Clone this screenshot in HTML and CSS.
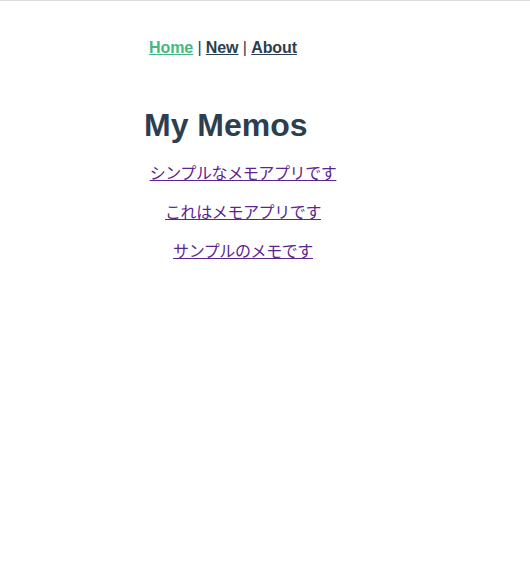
FILE: index.html
```html
<!DOCTYPE html>
<html lang="ja">
<head>
<meta charset="utf-8">
<title>My Memos</title>
<link rel="stylesheet" href="styles.css">
</head>
<body>
<div class="app">
  <nav class="nav">
    <span class="nav-inner"><a href="#" class="nav-link active">Home</a> | <a href="#" class="nav-link">New</a> | <a href="#" class="nav-link">About</a></span>
  </nav>
  <div class="home">
    <h1 class="title">My Memos</h1>
    <ul class="memos">
      <li class="memo"><a href="#" class="memo-link">シンプルなメモアプリです</a></li>
      <li class="memo"><a href="#" class="memo-link">これはメモアプリです</a></li>
      <li class="memo"><a href="#" class="memo-link">サンプルのメモです</a></li>
    </ul>
  </div>
</div>
</body>
</html>
```
FILE: styles.css
```css
html {
  border-top: 1px solid #dcdcdc;
  background: #fff;
}
body {
  margin: 8px 8px 8px;
}
.app {
  margin-left: 136px;
  width: 158px;
  font-family: "Liberation Sans", Arial, "Noto Sans CJK JP", sans-serif;
  text-align: center;
  color: #2c3e50;
}
.nav {
  padding: 30px 0;
  font-size: 16px;
  display: flex;
  justify-content: center;
}
.nav-inner {
  white-space: nowrap;
  letter-spacing: -0.1px;
}
.nav-link {
  font-weight: bold;
  color: #2c3e50;
}
.nav-link.active {
  color: #42b983;
}
.title {
  text-align: left;
  white-space: nowrap;
  font-size: 32px;
  margin: 20px 0 18px;
}
.memos {
  list-style: none;
  margin: 0;
  padding: 0 0 0 40px;
  display: flex;
  flex-direction: column;
  align-items: center;
  gap: 16px;
}
.memo {
  white-space: nowrap;
  line-height: 23px;
  font-family: "Liberation Sans", "Noto Sans CJK JP", sans-serif;
  font-size: 16px;
  letter-spacing: -0.4px;
}
.memo-link {
  color: #5a2590;
}
```
